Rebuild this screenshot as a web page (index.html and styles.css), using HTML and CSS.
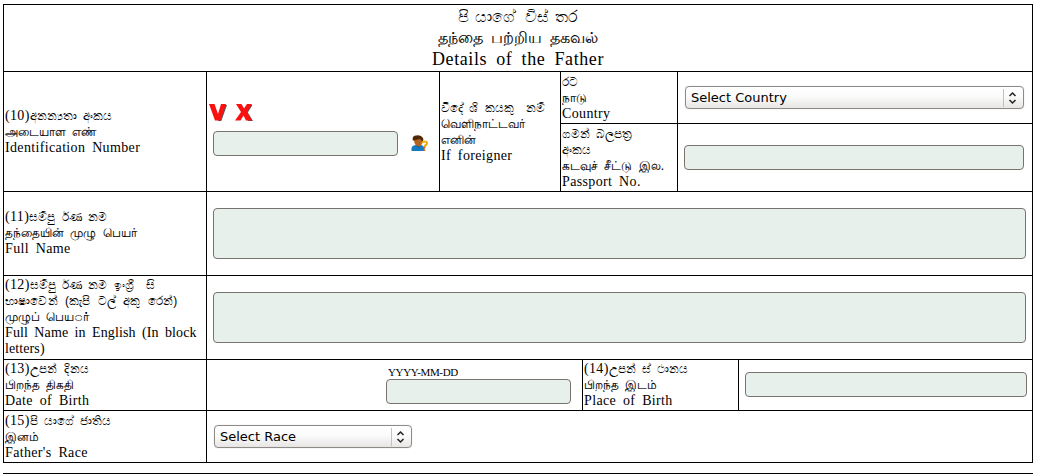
FILE: index.html
```html
<!DOCTYPE html>
<html lang="en">
<head>
<meta charset="utf-8">
<title>Details of the Father</title>
<link rel="stylesheet" href="styles.css">
</head>
<body>
<main class="sheet">
  <header class="title">
    <div class="si">පි යාගේ &nbsp;විස් තර</div>
    <div class="ta">தந்தை பற்றிய தகவல்</div>
    <div class="title-en">Details of the Father</div>
  </header>

  <section class="row row-id">
    <div class="cell label">
      <div class="line">(10)<span class="si">අනන්‍යතා අංකය</span></div>
      <div class="line ta">அடையாள எண்</div>
      <div class="line">Identification Number</div>
    </div>
    <div class="cell id-field">
      <div class="suffixes">
        <svg width="18" height="19" viewBox="0 0 18 19"><path d="M14 2H18L12.300 18H9Z" fill="#555"/><path d="M0 1H5.500L9 11L12 1H17L11.500 17.500H6Z" fill="#fb1010"/></svg>
        <svg width="18" height="19" viewBox="0 0 18 19"><path d="M14 2H17.500L12.800 9.500L18 18H13L9 10Z" fill="#555"/><path d="M1 1H6.500L9 5.500L12 1H17L12 9L17 17.500H11L8.500 12.500L5.500 17.500H0L6 9Z" fill="#fb1010"/></svg>
      </div>
      <div class="id-input">
        <input class="field field-id" type="text" aria-label="Identification Number">
        <svg width="17" height="17" viewBox="0 0 17 17">
          <path d="M0.500 16V13Q1 10.500 4.500 10H9Q12.500 10 13.500 13V16Z" fill="#167bc2"/>
          <path d="M5 10L7 13L9.500 10Z" fill="#0b568f"/>
          <path d="M3 5Q3 2 7 1.500Q11.500 1.500 11.500 6Q11 11 7.500 11.500Q4 11 3 6Z" fill="#b26420"/>
          <path d="M2 6Q0.500 1 5 0.500Q10 -0.500 12 3Q13 6 11 7Q10.500 4 8 4Q5 5.500 3 5Z" fill="#512807"/>
          <path d="M11 8Q12 6 14 6.500Q17 7 15.500 9.500Q13.500 10.500 13.500 12.500" fill="none" stroke="#f4a70c" stroke-width="2"/>
          <path d="M13.300 12V13.500M13.300 14.500V16" stroke="#e4600b" stroke-width="2"/>
        </svg>
      </div>
    </div>
    <div class="cell foreigner">
      <div class="line si">විදේ ශි කයකු &nbsp;නම්</div>
      <div class="line ta">வெளிநாட்டவர்</div>
      <div class="line ta">எனின்</div>
      <div class="line">If foreigner</div>
    </div>
    <div class="foreign-details">
      <div class="subrow country">
        <div class="cell sub-label">
          <div class="line si">රට</div>
          <div class="line ta">நாடு</div>
          <div class="line">Country</div>
        </div>
        <div class="cell control">
          <div class="select select-country"><span>Select Country</span><svg width="20" height="20" viewBox="0 0 20 20"><path d="M0.500 1V19" stroke="#c4c2be"/><path d="M6.500 8L9.500 5L12.500 8M6.500 12L9.500 15L12.500 12" fill="none" stroke="#222" stroke-width="1.500"/></svg></div>
        </div>
      </div>
      <div class="subrow passport">
        <div class="cell sub-label">
          <div class="line si">ගමන් බලපත්‍ර</div>
          <div class="line si">අංකය</div>
          <div class="line ta">கடவுச் சீட்டு இல.</div>
          <div class="line">Passport No.</div>
        </div>
        <div class="cell control"><input class="field field-passport" type="text" aria-label="Passport No."></div>
      </div>
    </div>
  </section>

  <section class="row row-name">
    <div class="cell label">
      <div class="line">(11)<span class="si">සම්පු ර්&zwnj;ණ නම</span></div>
      <div class="line ta">தந்தையின் முழு பெயர்</div>
      <div class="line">Full Name</div>
    </div>
    <div class="cell control"><textarea class="field area" aria-label="Full Name"></textarea></div>
  </section>

  <section class="row row-name">
    <div class="cell label">
      <div class="line">(12)<span class="si">සම්පු ර්&zwnj;ණ නම ඉංග්‍රී &nbsp;සි</span></div>
      <div class="line si wide">භාෂාවෙන් (කැපි ටල් අකු රෙන්)</div>
      <div class="line ta">முழுப் பெயர்&zwnj;்</div>
      <div class="line tight">Full Name in English (In block</div>
      <div class="line tight">letters)</div>
    </div>
    <div class="cell control"><textarea class="field area" aria-label="Full Name in English"></textarea></div>
  </section>

  <section class="row row-birth">
    <div class="cell label">
      <div class="line">(13)<span class="si wide">උපන් දිනය</span></div>
      <div class="line ta">பிறந்த திகதி</div>
      <div class="line">Date of Birth</div>
    </div>
    <div class="cell date">
      <div class="hint">YYYY-MM-DD</div>
      <input class="field field-date" type="text" aria-label="Date of Birth">
    </div>
    <div class="cell place-label">
      <div class="line">(14)<span class="si">උපන් ස් ථානය</span></div>
      <div class="line ta">பிறந்த இடம்</div>
      <div class="line">Place of Birth</div>
    </div>
    <div class="cell control place"><input class="field field-place" type="text" aria-label="Place of Birth"></div>
  </section>

  <section class="row row-race">
    <div class="cell label">
      <div class="line">(15)<span class="si">පි යාගේ ජාතිය</span></div>
      <div class="line ta">இனம்</div>
      <div class="line">Father's Race</div>
    </div>
    <div class="cell control">
      <div class="select select-race"><span>Select Race</span><svg width="20" height="20" viewBox="0 0 20 20"><path d="M0.500 1V19" stroke="#c4c2be"/><path d="M6.500 8L9.500 5L12.500 8M6.500 12L9.500 15L12.500 12" fill="none" stroke="#222" stroke-width="1.500"/></svg></div>
    </div>
  </section>
</main>
<div class="next-table"></div>
</body>
</html>
```
FILE: styles.css
```css
* { box-sizing: border-box; }
body {
  margin: 0;
  padding: 4px 0 0 3px;
  height: 474px;
  overflow: hidden;
  background: #fff;
  color: #000;
  font-family: "Liberation Serif", "Noto Sans", serif;
  font-size: 14px;
}
.sheet { width: 1030px; border: 1px solid #000; border-bottom: 0; }
.title {
  height: 67px;
  padding-top: 1px;
  border-bottom: 1px solid #000;
  text-align: center;
  line-height: 21px;
}
.title > div { height: 21px; white-space: nowrap; }
.title-en { font-size: 18px; line-height: 22px; letter-spacing: 0.6px; word-spacing: 4px; }
.row { display: flex; border-bottom: 1px solid #000; }
.row-id { height: 120px; }
.row-name { height: 84px; }
.row-birth { height: 51px; }
.row-race { height: 52px; }
.cell { display: flex; flex-direction: column; justify-content: center; padding-left: 1px; }
.label { width: 203px; border-right: 1px solid #000; flex: none; }
.row-name .label { padding-bottom: 2px; }
.line { height: 16px; line-height: 16px; white-space: nowrap; letter-spacing: 0.35px; word-spacing: 3px; }
.line.tight { letter-spacing: 0.1px; word-spacing: 2.8px; }
.si, .ta, .line.si, .line.ta { font-family: "Liberation Sans", sans-serif; font-size: 12px; letter-spacing: 0; }
.ta { -webkit-text-stroke: 0.12px #000; }
.line.wide, .line .wide { letter-spacing: 0.2px; word-spacing: 3.6px; }
.title .si, .title .ta { font-size: 16px; word-spacing: 4px; }
.title .si { word-spacing: 1.2px; }
.id-field { width: 233px; border-right: 1px solid #000; padding: 0 0 6px 2px; }
.suffixes { display: flex; gap: 8px; height: 28px; margin-top: 1px; }
.id-input { display: flex; align-items: center; gap: 13px; padding-left: 4px; }
.foreigner { width: 121px; border-right: 1px solid #000; }
.foreign-details { flex: 1; display: flex; flex-direction: column; }
.subrow { display: flex; }
.country { height: 52px; border-bottom: 1px solid #000; }
.passport { flex: 1; }
.sub-label { width: 117px; border-right: 1px solid #000; flex: none; }
.control { padding-left: 6px; flex: 1; }
.place { padding-bottom: 1px; }
.field {
  display: block;
  height: 25px;
  margin: 0;
  padding: 2px 4px;
  border: 1px solid #77746f;
  border-radius: 4px;
  background: #e7f0ea;
  resize: none;
  outline: 0;
}
.field-id, .field-date { width: 185px; }
.field-passport { width: 340px; }
.area { width: 813px; height: 51px; }
.date { width: 376px; border-right: 1px solid #000; padding-left: 179px; justify-content: flex-start; padding-top: 4px; }
.hint { font-size: 11px; line-height: 16px; height: 15px; padding-left: 2px; letter-spacing: -0.35px; }
.place-label { width: 156px; border-right: 1px solid #000; flex: none; }
.field-place { width: 282px; }
.select {
  display: flex;
  align-items: center;
  justify-content: space-between;
  height: 23px;
  margin-left: 1px;
  padding: 0 0 0 5px;
  border: 1px solid #8e8b87;
  border-radius: 4px;
  background: linear-gradient(#fff, #fbfbfb 45%, #e7e6e4);
  box-shadow: 0 0 1px #bbb;
  font: 13px/19px "DejaVu Sans", sans-serif;
}
.select-country { width: 339px; }
.select-race { width: 198px; }
.next-table { width: 1030px; margin-top: 10px; border-top: 1px solid #000; }
```
